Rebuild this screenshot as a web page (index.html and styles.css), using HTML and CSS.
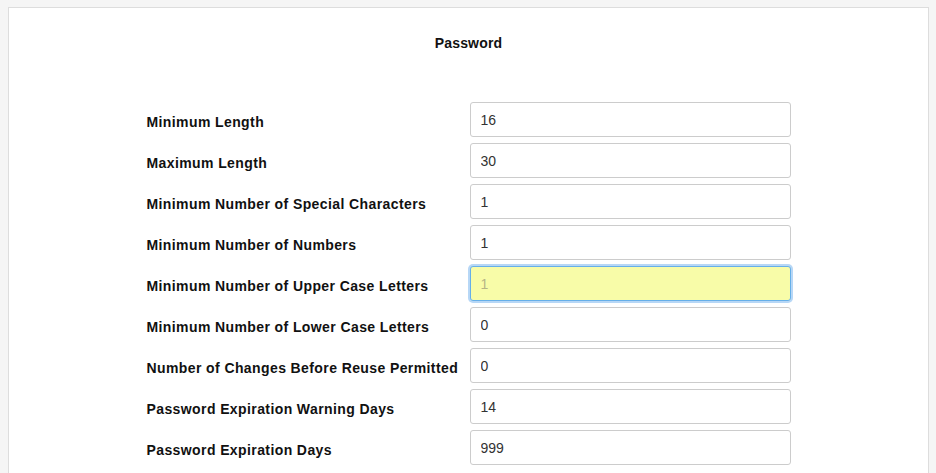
FILE: index.html
```html
<!DOCTYPE html>
<html lang="en">
<head>
<meta charset="utf-8">
<title>Password</title>
<link rel="stylesheet" href="styles.css">
</head>
<body>
<div class="card">
  <h2 class="title">Password</h2>
  <form class="form">
    <label class="label" for="f1">Minimum Length</label>
    <input class="field" id="f1" type="text" value="16">
    <label class="label" for="f2">Maximum Length</label>
    <input class="field" id="f2" type="text" value="30">
    <label class="label" for="f3">Minimum Number of Special Characters</label>
    <input class="field" id="f3" type="text" value="1">
    <label class="label" for="f4">Minimum Number of Numbers</label>
    <input class="field" id="f4" type="text" value="1">
    <label class="label" for="f5">Minimum Number of Upper Case Letters</label>
    <input class="field field-active" id="f5" type="text" value="1">
    <label class="label" for="f6">Minimum Number of Lower Case Letters</label>
    <input class="field" id="f6" type="text" value="0">
    <label class="label" for="f7">Number of Changes Before Reuse Permitted</label>
    <input class="field" id="f7" type="text" value="0">
    <label class="label" for="f8">Password Expiration Warning Days</label>
    <input class="field" id="f8" type="text" value="14">
    <label class="label" for="f9">Password Expiration Days</label>
    <input class="field" id="f9" type="text" value="999">
  </form>
</div>
</body>
</html>
```

FILE: styles.css
```css
html, body {
  margin: 0;
  padding: 0;
  background: #f5f5f5;
  height: 100%;
  overflow: hidden;
}

body {
  padding: 7px 7px 0 8px;
  box-sizing: border-box;
  font-family: "Liberation Sans", Arial, sans-serif;
  color: #111;
}

.card {
  background: #fff;
  border: 1px solid #dddddd;
  min-height: 600px;
  box-sizing: border-box;
}

.title {
  margin: 0;
  padding-top: 27px;
  text-align: center;
  font-size: 14px;
  letter-spacing: 0.2px;
  font-weight: bold;
  line-height: 16px;
  color: #111;
}

.form {
  width: 644px;
  margin: 51px auto 0;
  display: grid;
  grid-template-columns: 323px 321px;
  row-gap: 6px;
  align-items: center;
}

.label {
  font-size: 14px;
  letter-spacing: 0.4px;
  font-weight: bold;
  color: #111;
  padding-top: 4px;
}

.field {
  box-sizing: border-box;
  height: 35px;
  width: 321px;
  margin: 0;
  padding: 1px 10px 0;
  border: 1px solid #cccccc;
  border-radius: 3px;
  background: #fff;
  font-family: "Liberation Sans", Arial, sans-serif;
  font-size: 14px;
  color: #333;
  outline: none;
}

.field-active {
  background: #f8fca8;
  border-color: #66afe9;
  box-shadow: 0 0 0 2px #b7d7f6;
  color: #b6b486;
}
```
